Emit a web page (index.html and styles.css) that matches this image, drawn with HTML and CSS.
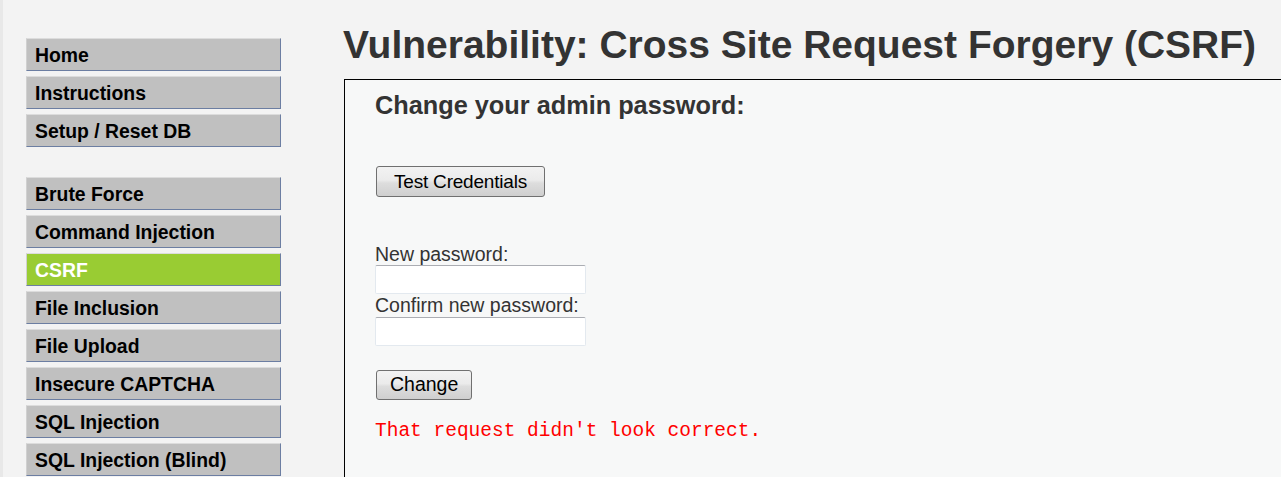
FILE: index.html
```html
<!DOCTYPE html>
<html>
<head>
<meta charset="utf-8">
<title>Vulnerability: Cross Site Request Forgery (CSRF)</title>
<link rel="stylesheet" href="styles.css">
</head>
<body>
<div class="page">
  <div class="sidebar">
    <ul class="menu">
      <li><a class="item">Home</a></li>
      <li><a class="item">Instructions</a></li>
      <li><a class="item">Setup / Reset DB</a></li>
    </ul>
    <ul class="menu group">
      <li><a class="item">Brute Force</a></li>
      <li><a class="item">Command Injection</a></li>
      <li><a class="item selected">CSRF</a></li>
      <li><a class="item">File Inclusion</a></li>
      <li><a class="item">File Upload</a></li>
      <li><a class="item">Insecure CAPTCHA</a></li>
      <li><a class="item">SQL Injection</a></li>
      <li><a class="item">SQL Injection (Blind)</a></li>
    </ul>
  </div>
  <div class="main">
    <h1 class="title">Vulnerability: Cross Site Request Forgery (CSRF)</h1>
    <div class="box">
      <h3 class="subtitle">Change your admin password:</h3>
      <button class="btn test-btn" type="button">Test Credentials</button>
      <form class="form">
        <label class="label">New password:</label>
        <input class="field" type="password">
        <label class="label">Confirm new password:</label>
        <input class="field" type="password">
        <button class="btn change-btn" type="button">Change</button>
      </form>
      <pre class="error">That request didn't look correct.</pre>
    </div>
  </div>
</div>
</body>
</html>
```
FILE: styles.css
```css
html, body {
  margin: 0;
  padding: 0;
  height: 100%;
  overflow: hidden;
  background: #f3f3f3;
  font-family: "Liberation Sans", Arial, sans-serif;
}
.page {
  display: flex;
  align-items: flex-start;
  min-height: 100%;
  border-left: 3px solid #e8e8e8;
  box-sizing: border-box;
}
.sidebar {
  width: 255px;
  padding: 38px 0 0 23px;
  flex-shrink: 0;
}
.menu {
  list-style: none;
  margin: 0;
  padding: 0;
}
.menu.group {
  margin-top: 30px;
}
.menu li {
  margin: 0 0 5px 0;
}
.item {
  display: block;
  box-sizing: border-box;
  width: 255px;
  height: 33px;
  padding: 5px 0 3px 8px;
  font-size: 19.4px;
  line-height: 23px;
  font-weight: bold;
  color: #000;
  background: #c0c0c0;
  border-top: 1px solid #dcdcdc;
  border-left: 1px solid #d0d0d0;
  border-right: 1px solid #6c7ea2;
  border-bottom: 1px solid #6c7ea2;
  white-space: nowrap;
}
.item.selected {
  background: #99cc33;
  color: #fff;
}
.main {
  flex: 1;
  margin-left: 63px;
  padding-top: 22px;
  min-width: 0;
}
.title {
  margin: 0 0 12px -1px;
  font-size: 39px;
  line-height: 45px;
  font-weight: bold;
  color: #333;
  white-space: nowrap;
}
.box {
  border: 1px solid #000;
  border-right: none;
  background: #f7f8f8;
  padding: 10px 0 60px 30px;
  min-height: 400px;
}
.subtitle {
  margin: 0;
  font-size: 25.3px;
  line-height: 30px;
  font-weight: bold;
  color: #333;
}
.btn {
  display: block;
  box-sizing: border-box;
  margin: 0 0 0 1px;
  padding: 0 13px;
  border: 1px solid #707070;
  border-radius: 3px;
  background: linear-gradient(#f2f2f2 0%, #ebebeb 45%, #dddddd 55%, #cfcfcf 100%);
  color: #000;
  font-family: "Liberation Sans", Arial, sans-serif;
  font-size: 19.5px;
}
.test-btn {
  margin-top: 46px;
  width: 169px;
  height: 31px;
  padding: 1px 0 0 0;
  font-size: 19px;
  letter-spacing: -0.2px;
}
.form {
  display: flex;
  flex-direction: column;
  align-items: flex-start;
  margin-top: 46px;
}
.label {
  font-size: 19.5px;
  line-height: 22.4px;
  color: #333;
}
.field {
  box-sizing: border-box;
  width: 211px;
  height: 29px;
  margin: 0;
  padding: 2px 4px;
  background: #fff;
  border: 1px solid #e3e9ef;
  border-top-color: #abadb3;
  border-radius: 2px;
}
.change-btn {
  margin-top: 24px;
  width: 96px;
  height: 30px;
}
.error {
  margin: 20px 0 0 0;
  font-family: "Liberation Mono", "Courier New", monospace;
  font-size: 19.5px;
  line-height: 22px;
  color: #ff0000;
}
```
